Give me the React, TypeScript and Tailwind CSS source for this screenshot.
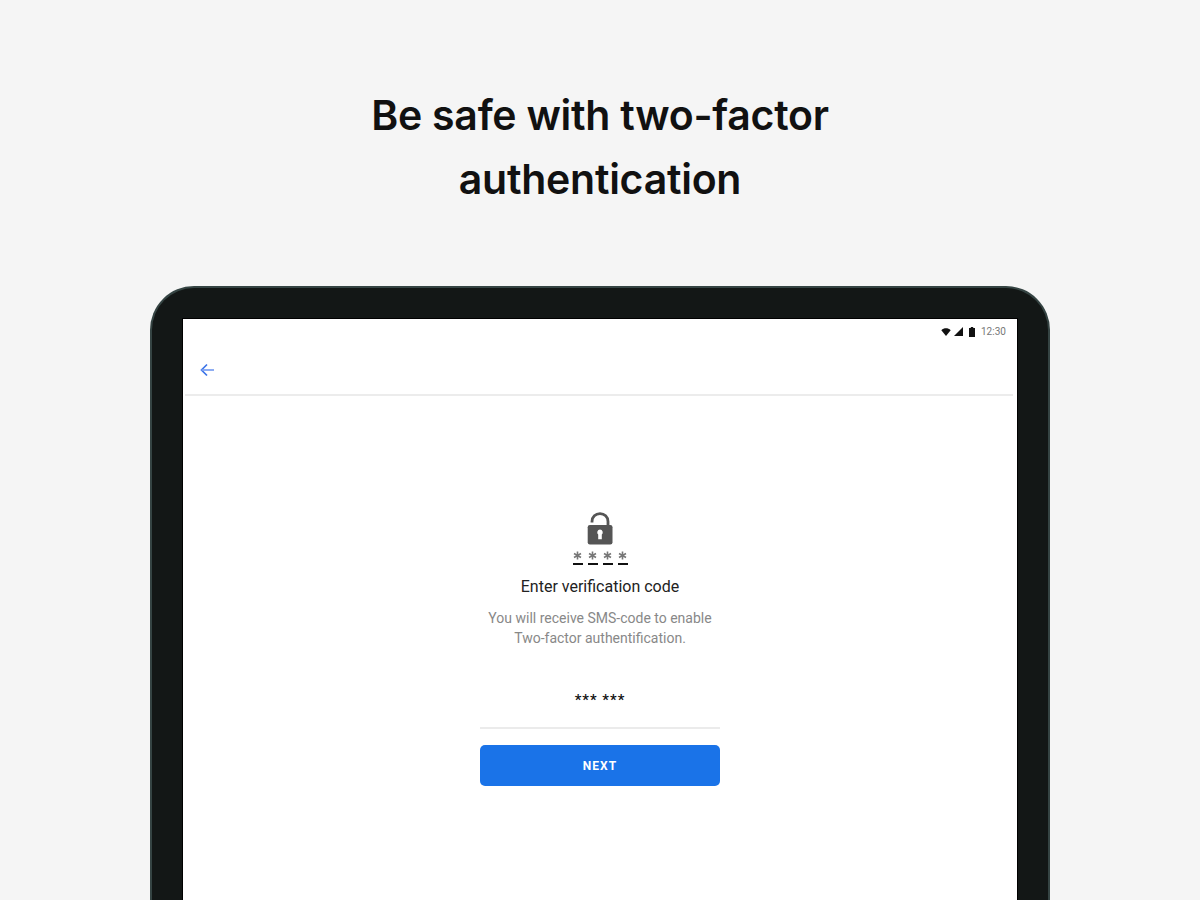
import type { ReactNode } from 'react';

const codeSlots = [0, 1, 2, 3];

function StatusBar() {
  return (
    <div className="flex h-[25px] items-center justify-end pr-[11px] text-[#111]">
      <svg className="h-[8px] w-[10px]" viewBox="0 0 10 8" fill="currentColor">
        <path d="M0.3 2.2C3 -0.3 7 -0.3 9.7 2.2L5 8z" />
      </svg>
      <svg
        className="ml-[3px] h-[9px] w-[9px]"
        viewBox="0 0 9 9"
        fill="currentColor"
      >
        <path d="M9 0v9H0z" />
      </svg>
      <svg
        className="ml-[6px] h-[10px] w-[6px]"
        viewBox="0 0 6 10"
        fill="currentColor"
      >
        <path d="M1.8 0h2.4v1H6v9H0V1h1.8z" />
      </svg>
      <span className="ml-[6px] w-[25px] whitespace-nowrap text-[10px] leading-none text-[#777]">
        12:30
      </span>
    </div>
  );
}

function TopBar() {
  return (
    <div className="mr-[4px] ml-[2px] flex h-[52px] items-center border-b-2 border-[#ececec] pt-[2px] pl-[15px]">
      <svg
        className="h-[14px] w-[15px]"
        viewBox="0 0 15 14"
        fill="none"
        stroke="#3b74e8"
        strokeWidth="1.7"
      >
        <path d="M7 1.5L1.5 7L7 12.5" />
        <path d="M1.5 7H14" stroke="#7a9ff0" />
      </svg>
    </div>
  );
}

function LockIcon() {
  return (
    <svg className="h-[33px] w-[26px]" viewBox="0 0 26 33">
      <path
        d="M5 10.5V9.5C5 4.8 8.6 1.6 13 1.6S21 4.8 21 9.5V14"
        fill="none"
        stroke="#555"
        strokeWidth="2.8"
      />
      <rect x="0.7" y="13" width="24.8" height="19.5" rx="2.2" fill="#555" />
      <path
        d="M13 17.4a3 3 0 0 1 1.8 5.2V27.2h-3.6v-4.6a3 3 0 0 1 1.8-5.2z"
        fill="#fff"
      />
    </svg>
  );
}

function Device({ children }: { children: ReactNode }) {
  return (
    <div className="mx-auto h-[700px] w-[900px] shrink-0 rounded-t-[44px] border-2 border-b-0 border-[#354443] bg-[#131716] px-[31px] pt-[31px]">
      <div className="flex h-full w-full flex-col bg-white outline outline-black">
        {children}
      </div>
    </div>
  );
}

export default function App() {
  return (
    <div className="flex h-[900px] w-[1200px] flex-col overflow-hidden bg-[#f5f5f5] font-['Roboto',sans-serif]">
      <h1 className="mt-[83px] h-[203px] shrink-0 text-center font-['Inter',sans-serif] text-[41px] leading-[64px] font-semibold tracking-[-0.25px] text-[#111]">
        Be safe with two-factor
        <br />
        authentication
      </h1>

      <Device>
        <StatusBar />
        <TopBar />

        <div className="mx-auto mt-[116px] flex w-[240px] flex-col items-center">
          <LockIcon />

          {/* code slots under the lock */}
          <div className="mt-[6px] flex gap-[5px]">
            {codeSlots.map((slot) => (
              <div key={slot} className="flex w-[10px] flex-col items-center">
                <svg
                  className="h-[9px] w-[9px]"
                  viewBox="0 0 9 9"
                  stroke="#777"
                  strokeWidth="1.6"
                >
                  <path d="M4.5 0.5v8M1 2.5l7 4M8 2.5l-7 4" />
                </svg>
                <div className="mt-[3px] h-[2px] w-[10px] bg-[#111]" />
              </div>
            ))}
          </div>

          <h2 className="mt-[12px] text-[16px] leading-[20px] whitespace-nowrap text-[#222]">
            Enter verification code
          </h2>
          <p className="mt-[11px] text-center text-[14px] leading-[20px] whitespace-nowrap text-[#888]">
            You will receive SMS-code to enable
            <br />
            Two-factor authentification.
          </p>

          <div className="mt-[40px] flex h-[41px] w-full justify-center border-b-2 border-[#ebebeb] pt-[2px] text-[15px] leading-[20px] font-medium tracking-[1px] text-[#111]">
            *** ***
          </div>
          <button className="mt-[16px] h-[41px] w-full rounded-[5px] bg-[#1a73e8] text-[12px] font-bold tracking-[1px] text-white">
            NEXT
          </button>
        </div>
      </Device>
    </div>
  );
}
